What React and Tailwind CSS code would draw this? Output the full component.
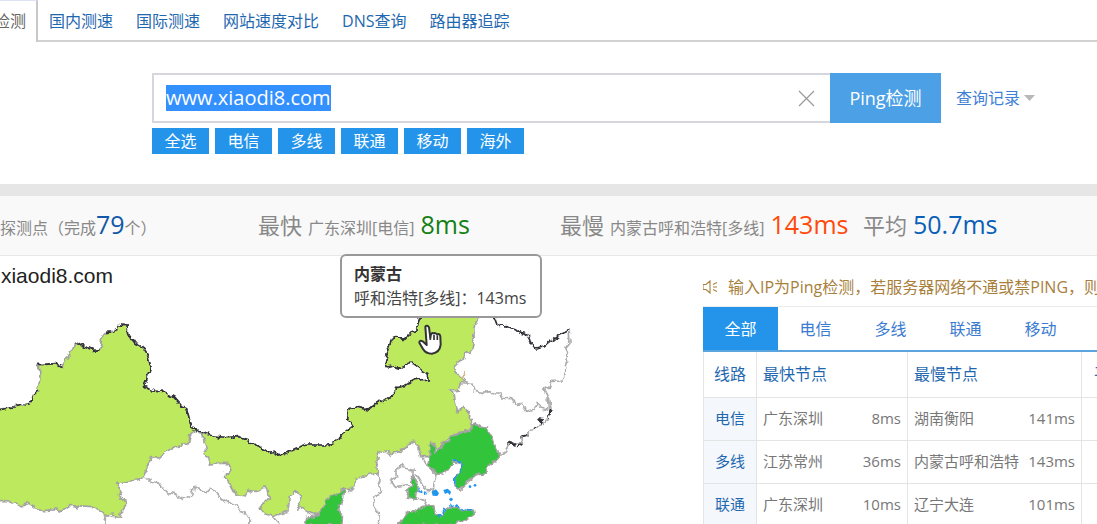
import React, { useEffect, useRef } from 'react';

const NAV = ['国内测速', '国际测速', '网站速度对比', 'DNS查询', '路由器追踪'];
const LINES = ['全选', '电信', '多线', '联通', '移动', '海外'];
const TABS = ['全部', '电信', '多线', '联通', '移动'];
const ROWS = [
  { line: '电信', fast: '广东深圳', fastMs: '8ms', slow: '湖南衡阳', slowMs: '141ms' },
  { line: '多线', fast: '江苏常州', fastMs: '36ms', slow: '内蒙古呼和浩特', slowMs: '143ms' },
  { line: '联通', fast: '广东深圳', fastMs: '10ms', slow: '辽宁大连', slowMs: '101ms' },
];

function NavBar() {
  return (
    <nav className="flex h-[42px] whitespace-nowrap text-base leading-6">
      <a href="#ping" className="flex w-[38px] shrink-0 justify-end overflow-hidden border-t border-r-2 border-t-[#dde3f5] border-r-[#c8c8cc] pt-2 pr-[10px] text-[#666]">
        检测
      </a>
      <div className="flex flex-1 gap-[23px] border-b-2 border-[#d2d2d2] pt-[9px] pl-[11px]">
        {NAV.map((item) => (
          <a key={item} href="#nav" className="text-[#1f68b0]">{item}</a>
        ))}
      </div>
    </nav>
  );
}

function SearchArea() {
  const inputRef = useRef(null);

  useEffect(() => {
    inputRef.current.focus();
    inputRef.current.select();
  }, []);

  return (
    <section className="pt-[31px] pb-[30px] pl-[152px]">
      <form className="flex h-[50px]" onSubmit={(e) => e.preventDefault()}>
        <div className="flex flex-1 items-center border-2 border-r-0 border-[#d6d7de] pr-[15px] pl-3">
          <input
            ref={inputRef}
            aria-label="域名或IP"
            defaultValue="www.xiaodi8.com"
            className="h-[26px] min-w-0 flex-1 text-xl leading-[26px] text-[#333] outline-none selection:bg-[#3390ff] selection:text-white"
          />
          <button type="button" aria-label="清空">
            <svg width="17" height="17" viewBox="0 0 17 17" stroke="#999" strokeWidth="1.2">
              <path d="M1 1L16 16M16 1L1 16" />
            </svg>
          </button>
        </div>
        <button type="submit" className="w-[111px] bg-[#4ca0e6] text-lg text-white">Ping检测</button>
        <a href="#history" className="flex w-[156px] items-center gap-1 pl-[15px] text-base text-[#3f7fd6]">
          查询记录
          <svg width="11" height="6" viewBox="0 0 11 6" fill="#b8b8b8"><path d="M0 0H11L5.5 6Z" /></svg>
        </a>
      </form>
      <div className="flex gap-[6px] pt-[5px]">
        {LINES.map((l) => (
          <button key={l} type="button" className="h-[26px] w-[57px] bg-[#2494eb] text-base leading-[26px] text-white">{l}</button>
        ))}
      </div>
    </section>
  );
}

function Summary() {
  return (
    <section className="flex h-[72px] items-baseline border-t-12 border-b border-t-[#e6e6e6] border-b-[#e8e8e8] bg-[#f9f9f9] pt-3 text-base leading-8 whitespace-nowrap text-[#888]">
      <p className="w-[258px]">探测点（完成<span className="text-[25px] text-[#1158a8]">79</span>个）</p>
      <p className="flex w-[302px] items-baseline gap-[6px]">
        <span className="text-[22px]">最快</span>
        <span>广东深圳[电信]</span>
        <span className="text-[25px] text-[#138013]">8ms</span>
      </p>
      <p className="flex w-[303px] items-baseline gap-[6px]">
        <span className="text-[22px]">最慢</span>
        <span>内蒙古呼和浩特[多线]</span>
        <span className="text-[25px] text-[#ff4a0a]">143ms</span>
      </p>
      <p className="flex items-baseline gap-[6px]">
        <span className="text-[22px]">平均</span>
        <span className="text-[25px] text-[#0a5fb8]">50.7ms</span>
      </p>
    </section>
  );
}

function ChinaMap() {
  return (
    <svg width="690" height="234" viewBox="0 -60 2070 702" fill="none" strokeWidth="5" strokeLinejoin="round" className="block shrink-0">
      <defs>
        {/* roughens the province outlines */}
        <filter id="rough" filterUnits="userSpaceOnUse" x="-60" y="-60" width="2130" height="760">
          <feTurbulence type="fractalNoise" baseFrequency="0.05" numOctaves="3" seed="4" />
          <feDisplacementMap in="SourceGraphic" scale="20" xChannelSelector="R" yChannelSelector="G" />
        </filter>
      </defs>
      <g filter="url(#rough)">
        {/* Xinjiang */}
        <path
          fill="#bce95d"
          stroke="#a3a3a3"
          d="M-40 305L20 294L50 289L85 282L95 260L113 243L120 205L118 164L170 161L190 173L192 155L212 123L230 96L245 106L280 121L299 119L306 85L315 67L341 66L355 44L381 47L383 70L405 100L430 113L441 130L453 168L443 195L433 228L460 243L495 248L520 260L548 291L560 296L570 335L584 363L570 378L563 402L535 406L505 419L480 444L450 443L440 478L427 506L390 513L348 520L362 535L356 555L382 580L365 600L361 626L340 612L318 615L300 603L278 593L205 589L178 606L168 599L125 602L96 592L85 577L55 588L28 573L-40 570Z"
        />
        {/* Gansu, Qinghai */}
        <g stroke="#acacac">
          <path d="M427 506L452 507L458 518L480 523L500 548L520 550L548 568L575 556L580 527L620 548L633 535L670 571L705 587L712 600L735 604L752 632L748 645" />
          <path d="M361 626L340 622L318 618L314 645M820 622L838 642M584 366L607 370" />
        </g>
        {/* Inner Mongolia */}
        <path
          fill="#bce95d"
          stroke="#a3a3a3"
          d="M607 370L640 378L680 383L715 380L745 390L765 408L790 418L812 430L825 427L845 437L885 418L920 405L985 405L1015 390L1030 370L1057 348L1043 325L1045 300L1065 290L1105 300L1140 272L1160 270L1185 248L1190 232L1215 227L1240 212L1285 207L1280 190L1240 160L1225 160L1210 177L1180 170L1165 175L1155 160L1165 120L1180 82L1215 88L1230 72L1252 62L1250 50L1263 15L1430 15L1431 30L1424 55L1427 72L1418 85L1420 98L1415 120L1413 130L1403 123L1390 145L1375 155L1364 174L1375 195L1390 206L1395 217L1381 219L1375 238L1348 240L1363 253L1365 275L1375 305L1390 292L1402 302L1412 316L1411 338L1418 350L1394 365L1370 370L1350 380L1330 400L1310 412L1298 400L1292 440L1262 440L1256 408L1238 395L1222 403L1210 420L1185 425L1168 438L1155 420L1138 430L1130 452L1132 490L1070 505L1067 535L1035 535L1012 550L990 565L970 595L955 614L930 610L900 595L895 580L903 558L885 545L868 561L864 600L820 620L795 610L780 598L790 575L808 565L805 540L795 534L775 546L745 540L735 558L715 555L700 545L692 524L670 500L690 483L685 460L655 460L632 465L625 445L612 430L620 422Z"
        />
        <g transform="translate(840 0)">
          {/* northeast provinces */}
          <g stroke="#acacac">
            <path d="M868 68L870 100L858 115L862 145L852 185L850 213L812 214L806 232L793 238L805 262L803 300L782 294L773 278L763 297L740 304L725 281L706 283L695 266L670 265L658 252L640 252L630 242L605 247L584 243L575 220L548 218" />
            <path d="M805 262L811 302L806 321L788 344L762 353L743 375L725 380L730 398L688 400L678 427L657 438" />
          </g>
          <path stroke="#d6b986" d="M542 202L553 196L555 185" />

          {/* Hebei, Shanxi, Beijing */}
          <g stroke="#acacac">
            <path d="M420 440L443 470L470 490L462 520L460 542L438 538L415 500L405 498M385 530L378 525L345 530L335 515L350 500L347 482L370 464L378 475L400 480L398 498" />
            <path d="M288 490L300 510L295 525L306 545L280 562L283 590L298 610L295 645M205 545L228 535M0 610L20 612L28 580" />
            <path d="M414 568L432 572L440 590" />
          </g>

          <g fill="#33c43a" stroke="#a3a3a3">
            {/* Liaoning */}
            <path d="M455 401L466 407L465 427L490 400L506 393L512 379L550 367L570 360L583 340L603 351L620 354L635 380L645 410L658 438L643 455L620 475L617 490L590 495L565 515L537 540L525 530L526 500L546 475L543 460L520 455L500 485L472 494L462 480L443 467Z" />
            {/* Tianjin */}
            <path d="M398 498L408 510L407 525L414 533L408 568L385 565L380 538L390 532Z" />
            {/* Shandong */}
            <path d="M355 645L370 620L390 602L412 603L425 590L450 585L462 592L466 608L480 617L494 600L515 590L545 600L580 600L583 613L560 628L535 634L525 645Z" />
            {/* Shaanxi */}
            <path d="M75 645L80 622L115 617L130 590L137 570L165 550L195 538L190 570L176 600L188 625L182 645Z" />
          </g>

          {/* Bohai coastline */}
          <g stroke="#2196ee" strokeWidth="5">
            <path d="M520 455L533 452L547 464L545 480L525 500L524 520L534 533" strokeDasharray="30 4" />
            <path d="M414 540L440 549M473 622L485 610L494 595M508 582L525 590L550 598L578 600" strokeDasharray="14 5" />
          </g>

          {/* national border, east */}
          <g stroke="#303038" strokeWidth="5">
            <path d="M423 15L410 50L412 62L390 72L375 88L340 82L325 120L315 160L325 175L340 170L370 177L385 160L400 160L440 190L445 207L400 212L375 227L350 232L345 248L320 270L300 272L265 300L225 290L205 300L203 325L217 348L190 370L175 390L145 405L80 405L45 418L5 437L-15 427L-28 430L-50 418L-75 408L-95 390L-125 380L-160 383L-200 378L-235 365L-256 363L-270 335L-280 296L-292 291L-320 260L-345 248L-380 243L-407 228L-397 195L-387 168L-399 130L-410 113L-435 100L-457 70L-459 47L-485 44" />
            <path d="M640 15L653 49L680 47L706 56L718 66L738 70L754 98L765 114L795 108L833 78L868 61" />
          </g>
          <path stroke="#303038" strokeWidth="6" strokeDasharray="22 7" d="M812 300L806 320M772 327L793 344M768 352L761 354M745 374L725 380M731 401L707 406L685 397" />
          <path fill="#303038" d="M770 325L788 327L794 346L783 340Z" />
        </g>
        <g stroke="#303038">
          <path d="M113 164L170 161L190 173M230 96L245 106L280 121L299 119" />
          <path strokeDasharray="18 6" d="M0 299L50 289L85 282L95 260L113 243M315 67L341 66L355 44" />
        </g>
      </g>

      {/* islands */}
      <g fill="#2196ee">
        <path d="M1295 545L1308 538L1317 550L1312 558L1298 557ZM1330 540L1343 536L1353 545L1350 555L1343 548L1335 552Z" />
        <circle cx="1410" cy="530" r="4" />
        <circle cx="1425" cy="526" r="4" />
        <circle cx="1353" cy="568" r="5" />
      </g>

      {/* hand pointer */}
      <path
        fill="#fff"
        stroke="#333"
        strokeWidth="6"
        d="M1276 50Q1281 44 1287 52L1291 83Q1292 66 1302 70Q1305 67 1311 73Q1320 70 1321 80L1322 104Q1319 128 1296 131Q1277 131 1269 117L1258 98Q1258 89 1268 94L1280 105Z"
      />
      <path stroke="#333" strokeWidth="5" d="M1291 77V90M1302 74V90M1312 76V90" />
    </svg>
  );
}

function MapPanel() {
  return (
    <div className="relative min-w-0 flex-1 overflow-x-clip">
      <h2 className="flex h-[34px] w-[113px] justify-end overflow-hidden pt-2 font-['Liberation_Sans',Arial,sans-serif] text-[21px] leading-6 text-[#222]">
        xiaodi8.com
      </h2>
      <ChinaMap />
      <div className="absolute -top-[2px] left-[340px] w-[202px] rounded-md border-2 border-[#999] bg-white pt-[6px] pb-[6px] pl-3 text-base leading-6 whitespace-nowrap text-[#444]">
        <strong className="block text-[#333]">内蒙古</strong>
        呼和浩特[多线]：143ms
      </div>
    </div>
  );
}

function ResultPanel() {
  return (
    <div className="w-[394px] shrink-0 overflow-hidden whitespace-nowrap">
      <p className="-ml-px flex items-center gap-[10px] pt-[19px] pb-[7px] text-base leading-6 text-[#a8803c]">
        <svg width="16" height="14" viewBox="0 0 16 14" fill="none" stroke="#a8803c" strokeWidth="1.1" className="shrink-0">
          <path d="M1 4.500H4L8 1V13L4 9.500H1ZM11 4.500L15 2.500M11 7H15M11 9.500L15 11.500" />
        </svg>
        输入IP为Ping检测，若服务器网络不通或禁PING，则
      </p>
      <div className="flex border-t border-b-2 border-t-[#ececec] border-b-[#5ba4de]">
        {TABS.map((t, i) => (
          <button
            key={t}
            type="button"
            className={i === 0 ? 'h-[43px] w-[75px] bg-[#2494eb] text-base text-white' : 'h-[43px] w-[75px] text-base text-[#3b7bd0]'}
          >
            {t}
          </button>
        ))}
      </div>
      <table className="w-[460px] table-fixed border-collapse text-[15px] text-[#777]">
        <thead>
          <tr className="h-[45px] text-left text-base text-[#1f68b0] [&>th]:border [&>th]:border-t-0 [&>th]:border-[#e4e4e4] [&>th]:font-normal">
            <th className="w-[53px] text-center">线路</th>
            <th className="w-[151px] pl-[6px]">最快节点</th>
            <th className="w-[174px] pl-[6px]">最慢节点</th>
            <th className="pl-3">平均</th>
          </tr>
        </thead>
        <tbody>
          {ROWS.map((r) => (
            <tr key={r.line} className="h-[43px] [&>*]:border [&>*]:border-[#e4e4e4]">
              <th className="bg-[#f4f8fc] font-normal text-[#1f68b0]">{r.line}</th>
              <td className="px-[6px]">
                <span className="flex justify-between">{r.fast}<span>{r.fastMs}</span></span>
              </td>
              <td className="px-[6px]">
                <span className="flex justify-between">{r.slow}<span>{r.slowMs}</span></span>
              </td>
              <td />
            </tr>
          ))}
        </tbody>
      </table>
    </div>
  );
}

export default function App() {
  return (
    <div className="h-screen overflow-hidden bg-white font-['Open_Sans','Noto_Sans_CJK_SC',sans-serif]">
      <NavBar />
      <SearchArea />
      <Summary />
      <main className="flex">
        <MapPanel />
        <ResultPanel />
      </main>
    </div>
  );
}
